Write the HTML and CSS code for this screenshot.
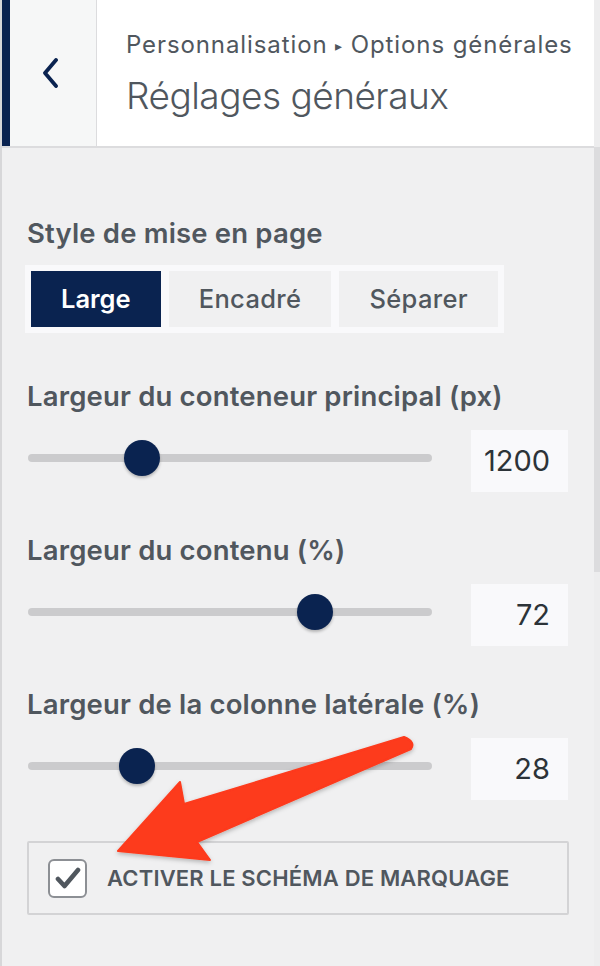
FILE: index.html
```html
<!DOCTYPE html>
<html>
<head>
    <title>Réglages généraux</title>
    <link rel="stylesheet" href="styles.css">
</head>
<body>
    <div class="panel">
        <div class="main">
            <div class="header">
                <div class="back-btn">
                    <svg width="20" height="30" viewBox="0 0 20 30">
                        <polyline points="15,2 4,15 15,28" fill="none" stroke="#0a2350" stroke-width="3.8" stroke-linecap="round" stroke-linejoin="round"/>
                    </svg>
                </div>
                <div class="header-text">
                    <div class="breadcrumb">Personnalisation <span class="sep">▸</span> Options générales</div>
                    <div class="page-title">Réglages généraux</div>
                </div>
            </div>

            <div class="content">
                <div class="control">
                    <div class="label">Style de mise en page</div>
                    <div class="btn-group">
                        <div class="seg-btn active">Large</div>
                        <div class="seg-btn">Encadré</div>
                        <div class="seg-btn">Séparer</div>
                    </div>
                </div>

                <div class="control">
                    <div class="label">Largeur du conteneur principal (px)</div>
                    <div class="slider-row">
                        <div class="track"><div class="thumb" style="left: 96px"></div></div>
                        <div class="num-box">1200</div>
                    </div>
                </div>

                <div class="control">
                    <div class="label">Largeur du contenu (%)</div>
                    <div class="slider-row">
                        <div class="track"><div class="thumb" style="left: 269px"></div></div>
                        <div class="num-box">72</div>
                    </div>
                </div>

                <div class="control">
                    <div class="label">Largeur de la colonne latérale (%)</div>
                    <div class="slider-row">
                        <div class="track"><div class="thumb" style="left: 91px"></div></div>
                        <div class="num-box">28</div>
                    </div>
                </div>

                <div class="check-box">
                    <div class="checkbox">
                        <svg width="26" height="24" viewBox="0 0 26 24">
                            <polyline points="3,13 9.5,20 23,4" fill="none" stroke="#50575e" stroke-width="4.6" stroke-linecap="round" stroke-linejoin="round"/>
                        </svg>
                    </div>
                    <span class="check-label">ACTIVER LE SCHÉMA DE MARQUAGE</span>
                </div>
            </div>
        </div>
        <div class="scrollbar"><div class="scroll-thumb"></div></div>

        <!-- flèche rouge d'annotation -->
        <svg class="arrow" width="600" height="966" viewBox="0 0 600 966">
            <defs>
                <filter id="shadow" x="-10%" y="-10%" width="120%" height="130%">
                    <feDropShadow dx="0" dy="2" stdDeviation="2" flood-color="#000" flood-opacity="0.25"/>
                </filter>
            </defs>
            <path d="M404,737 L184,804 L180,782 L118,851 L210,860 L197,842 L411,749 Q416,742 404,737 Z"
                  fill="#fd3a1c" stroke="#fd3a1c" stroke-width="2" stroke-linejoin="round" filter="url(#shadow)"/>
        </svg>
    </div>
</body>
</html>
```

FILE: styles.css
```css
body {
    margin: 0;
    background-color: #f0f0f1;
    font-family: Inter, "Noto Sans", sans-serif;
    color: #50575e;
}
.panel {
    position: relative;
    width: 600px;
    height: 966px;
    display: flex;
    box-sizing: border-box;
    border-left: 2px solid #d7d7d9;
    overflow: hidden;
}
.main {
    flex: 1;
}
.header {
    display: flex;
    height: 146px;
    background-color: white;
    border-bottom: 2px solid #dcdcde;
}
.back-btn {
    width: 86px;
    background-color: #f6f7f7;
    border-left: 8px solid #0a2350;
    border-right: 1px solid #dcdcde;
    display: flex;
    align-items: center;
    justify-content: center;
}
.back-btn svg {
    margin-left: -4px;
}
.header-text {
    padding: 30px 0 0 29px;
    white-space: nowrap;
}
.breadcrumb {
    font-size: 24px;
    line-height: 30px;
    letter-spacing: 0.9px;
    color: #50575e;
}
.breadcrumb .sep {
    font-size: 14px;
    vertical-align: 2px;
}
.page-title {
    font-size: 37px;
    font-weight: 300;
    line-height: 44px;
    letter-spacing: -0.5px;
    margin-top: 13px;
    color: #50575e;
}
.content {
    padding: 68px 25px 0 25px;
}
.control {
    margin-bottom: 41px;
}
.label {
    font-size: 27.5px;
    font-weight: 600;
    line-height: 34px;
    letter-spacing: 0.17px;
    color: #50575e;
    white-space: nowrap;
}
.btn-group {
    display: flex;
    width: fit-content;
    gap: 8px;
    padding: 6px;
    margin: 15px 0 46px -2px;
    background-color: #f9f9fb;
}
.control:first-child {
    margin-bottom: 0;
}
.seg-btn {
    height: 56px;
    line-height: 56px;
    padding: 0 30px;
    background-color: #f0f0f1;
    font-size: 25.5px;
    font-weight: 500;
    letter-spacing: 0.35px;
    color: #50575e;
}
.seg-btn.active {
    background-color: #0a2350;
    color: white;
    font-weight: 600;
    letter-spacing: 0;
}
.slider-row {
    display: flex;
    align-items: center;
    margin-top: 17px;
}
.track {
    position: relative;
    width: 404px;
    height: 8px;
    margin: 0 39px 0 1px;
    border-radius: 4px;
    background-color: #cbcbcd;
    top: -3px;
}
.thumb {
    position: absolute;
    top: -14px;
    width: 36px;
    height: 36px;
    border-radius: 50%;
    background-color: #0a2350;
    box-shadow: 0 2px 3px rgba(0, 0, 0, 0.25);
}
.num-box {
    width: 97px;
    height: 62px;
    box-sizing: border-box;
    padding-right: 18px;
    background-color: #f9f9fb;
    text-align: right;
    line-height: 62px;
    font-size: 29px;
    color: #2c3338;
}
.check-box {
    display: flex;
    align-items: center;
    gap: 20px;
    width: 542px;
    height: 74px;
    box-sizing: border-box;
    margin-top: 1px;
    padding-left: 19px;
    border: 2px solid #d3d3d5;
    border-radius: 2px;
}
.checkbox {
    width: 39px;
    height: 39px;
    box-sizing: border-box;
    border: 2px solid #8c8f94;
    border-radius: 6px;
    background-color: white;
    display: flex;
    align-items: center;
    justify-content: center;
}
.check-label {
    font-size: 22px;
    font-weight: 600;
    letter-spacing: 0.17px;
    color: #50575e;
    white-space: nowrap;
}
.scrollbar {
    width: 6px;
    background-color: #ededee;
}
.scroll-thumb {
    margin-top: 147px;
    height: 425px;
    background-color: #dcdcde;
}
.arrow {
    position: absolute;
    left: -2px;
    top: 0;
    pointer-events: none;
}
```
